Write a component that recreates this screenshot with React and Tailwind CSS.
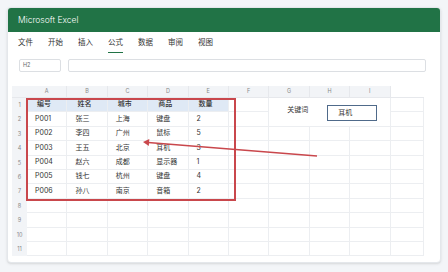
import React from 'react';

const cols = ['A', 'B', 'C', 'D', 'E', 'F', 'G', 'H', 'I', ''];
const tabs = ['文件', '开始', '插入', '公式', '数据', '审阅', '视图'];

const data = [
  ['编号', '姓名', '城市', '商品', '数量'],
  ['P001', '张三', '上海', '键盘', '2'],
  ['P002', '李四', '广州', '鼠标', '5'],
  ['P003', '王五', '北京', '耳机', '3'],
  ['P004', '赵六', '成都', '显示器', '1'],
  ['P005', '钱七', '杭州', '键盘', '4'],
  ['P006', '孙八', '南京', '音箱', '2'],
];

const font = { fontFamily: '"Inter", "Noto Sans CJK SC", sans-serif' };

function Cell({ children, className = '' }) {
  return (
    <div className={`border-r border-b border-[#eceef1] flex items-center text-[7px] text-[#333] ${className}`}>
      {children}
    </div>
  );
}

export default function App() {
  const rows = Array.from({ length: 11 }, (_, i) => i);

  return (
    <div className="min-h-screen bg-[#f3f5f8] pt-[7px] pl-[7px]" style={font}>
      <div className="w-[434px] h-[256px] bg-white rounded-[4px] border border-[#e4e7eb] shadow-sm overflow-hidden">
        {/* title bar */}
        <div className="h-[24px] bg-[#217346] flex items-center pl-[10px] text-white text-[8.5px] font-light">
          Microsoft Excel
        </div>

        {/* ribbon tabs */}
        <div className="flex gap-[15px] pl-[10px] pt-[6px] h-[27px] text-[7.5px] text-[#333]">
          {tabs.map((t) => (
            <span
              key={t}
              className={`leading-[10px] h-[15px] pb-[3px] ${t === '公式' ? 'border-b-[1.5px] border-[#217346]' : ''}`}
            >
              {t}
            </span>
          ))}
        </div>

        {/* formula bar */}
        <div className="flex gap-[7px] pl-[11px] pr-[14px] h-[13px]">
          <div className="w-[42px] border border-[#dcdfe3] rounded-[2px] flex items-center pl-[3px] text-[5.5px] text-[#666]">
            H2
          </div>
          <div className="flex-1 border border-[#dcdfe3] rounded-[2px]" />
        </div>

        {/* sheet */}
        <div className="relative mt-[14px] ml-[4px] w-[412px]">
          <div className="grid grid-cols-[15px_repeat(9,40.4px)_1fr] grid-rows-[12px_repeat(11,14.4px)]">
            {/* header row */}
            <div className="bg-[#f2f4f7] border-b border-[#e6e8ec]" />
            {cols.map((c, i) => (
              <div
                key={'h' + i}
                className={`flex items-center justify-center text-[5.5px] text-[#888] border-b border-[#e6e8ec] ${c ? 'bg-[#f2f4f7] border-r' : ''}`}
              >
                {c}
              </div>
            ))}

            {rows.map((r) => (
              <React.Fragment key={r}>
                <div className="bg-[#f2f4f7] flex items-center justify-center text-[5.5px] text-[#888]">
                  {r + 1}
                </div>
                {[0, 1, 2, 3, 4, 5].map((c) => (
                  <Cell key={c} className={r === 0 && c < 5 ? 'bg-[#dfe9f5] font-medium pl-[10px]' : 'pl-[8px]'}>
                    {data[r] && data[r][c]}
                  </Cell>
                ))}
                {r === 0 && (
                  <div className="col-span-3 row-span-2 border-r border-b border-[#eceef1] flex items-center pl-[18px] gap-[19px] text-[7px] text-[#333]">
                    <span className="-mt-[3px]">关键词</span>
                    <div className="w-[50px] h-[16px] border-[1.5px] border-[#4f6a8a] flex items-center pl-[10px] mt-[2px]">
                      耳机
                    </div>
                  </div>
                )}
                {r > 1 && [6, 7, 8].map((c) => <Cell key={c} />)}
                <Cell />
              </React.Fragment>
            ))}
          </div>

          {/* highlighted range */}
          <div className="absolute left-[14px] top-[12px] w-[210px] h-[103px] border-2 border-[#c9474c] pointer-events-none" />

          {/* arrow */}
          <svg className="absolute left-0 top-0 pointer-events-none" width="412" height="172">
            <line x1="305" y1="70" x2="136" y2="56.5" stroke="#c9474c" strokeWidth="1.5" />
            <polygon points="131,56 137.3,53 136.8,60" fill="#c9474c" />
          </svg>
        </div>
      </div>
    </div>
  );
}
